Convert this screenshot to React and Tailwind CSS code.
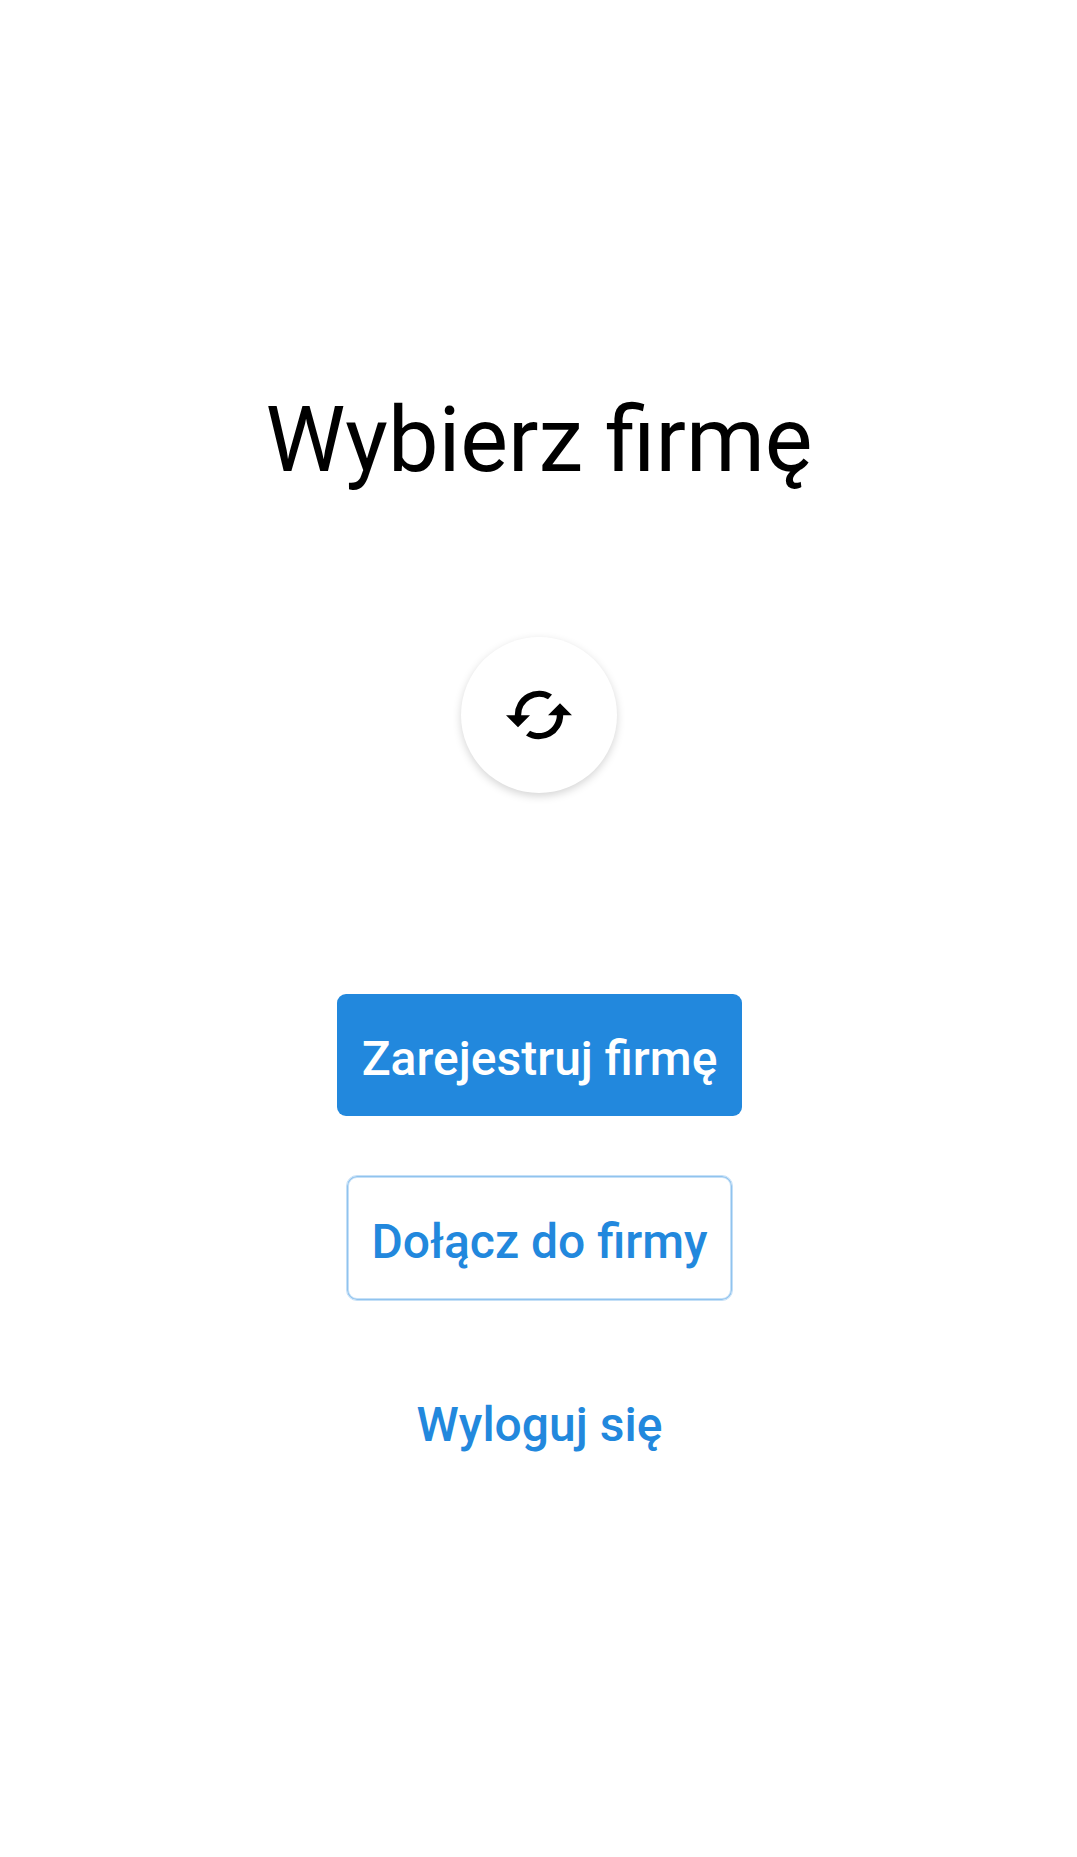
export default function App() {
  return (
    <main className="flex h-[1857px] w-full flex-col items-center bg-white pt-[387px] pl-px font-['Roboto',sans-serif]">
      <h1 className="text-[90px] leading-[108px] text-black">Wybierz firmę</h1>
      <button aria-label="Odśwież" className="mt-[142px] flex h-[156px] w-[156px] items-center justify-center rounded-full bg-white shadow-[0_3px_8px_rgba(0,0,0,0.17)]">
        <svg viewBox="-36 -36 72 72" className="h-[72px] w-[72px]" fill="black">
          <path d="M13-20.6A24.3 24.3 0 0 0-24.2 0.2H-33L-21 12.2L-9 0.2H-17.8A18 18 0 0 1 9-15.8Z" />
          <path d="M-13 20.6A24.3 24.3 0 0 0 24.2 0.2H33L21-11.8L9 0.2H17.8A18 18 0 0 1-9 15.8Z" />
        </svg>
      </button>
      <button className="mt-[201px] h-[122px] w-[405px] rounded-[9px] bg-[#2288dd] pt-[8px] pl-px text-[48px] font-medium text-white">Zarejestruj firmę</button>
      <button className="mt-[59px] h-[126px] w-[387px] rounded-[11px] border border-[#c5e0f7] pt-[8px] pl-px text-[48px] font-medium text-[#2288dd] shadow-[inset_0_0_0_1px_#90c3ee,inset_0_0_0_2px_#c5e0f7]">Dołącz do firmy</button>
      <button className="mt-[60px] h-[122px] pt-[6px] pl-px text-[48px] font-medium text-[#2288dd]">Wyloguj się</button>
    </main>
  );
}
